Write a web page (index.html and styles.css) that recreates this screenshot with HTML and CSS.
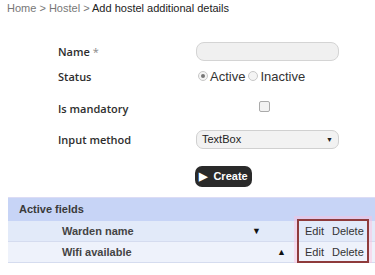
FILE: index.html
```html
<!DOCTYPE html>
<html lang="en">
<head>
  <meta charset="UTF-8">
  <meta name="viewport" content="width=device-width, initial-scale=1.0">
  <title>Add hostel additional details</title>
  <link rel="stylesheet" href="styles.css">
</head>
<body>
  <div class="crumbs">
    <span class="crumb-link">Home</span> &gt; <span class="crumb-link">Hostel</span> &gt; <span class="crumb-current">Add hostel additional details</span>
  </div>

  <div class="form">
    <div class="row row-name">
      <label class="label">Name <span class="req">*</span></label>
      <div class="field"><div class="text-input"></div></div>
    </div>
    <div class="row row-status">
      <label class="label">Status</label>
      <div class="field radios">
        <span class="radio checked"></span><span class="radio-text">Active</span>
        <span class="radio"></span><span class="radio-text">Inactive</span>
      </div>
    </div>
    <div class="row row-mandatory">
      <label class="label">Is mandatory</label>
      <div class="field"><span class="checkbox"></span></div>
    </div>
    <div class="row row-method">
      <label class="label">Input method</label>
      <div class="field">
        <div class="select"><span>TextBox</span><span class="caret">&#9660;</span></div>
      </div>
    </div>
    <div class="row row-submit">
      <span class="label"></span>
      <button class="create-btn">&#9654;&nbsp; Create</button>
    </div>
  </div>

  <div class="fields">
    <div class="fields-head">Active fields</div>
    <div class="fields-row">
      <span class="fname">Warden name</span>
      <span class="arrows"><span class="down">&#9660;</span><span class="up"></span></span>
      <span class="actions"><span>Edit</span><span>Delete</span></span>
    </div>
    <div class="fields-row alt">
      <span class="fname">Wifi available</span>
      <span class="arrows"><span class="down"></span><span class="up">&#9650;</span></span>
      <span class="actions"><span>Edit</span><span>Delete</span></span>
    </div>
    <div class="highlight"></div>
  </div>
</body>
</html>
```

FILE: styles.css
```css
body {
  margin: 0;
  background: #fff;
  font-family: "Liberation Sans", Arial, sans-serif;
  color: #333;
}
.crumbs {
  padding: 1px 0 0 7px;
  height: 16px;
  font-size: 11px;
  line-height: 14px;
  color: #777;
}
.crumb-current {
  color: #222;
}
.form {
  padding: 25px 0 0 58px;
}
.row {
  display: flex;
  align-items: center;
}
.label {
  width: 138px;
  flex: none;
  font-family: "Open Sans", sans-serif;
  font-weight: 600;
  font-size: 11px;
  color: #2e2e2e;
}
.req {
  color: #888;
  font-weight: 400;
}
.row-name { height: 18px; }
.row-status { height: 20px; margin-top: 6px; }
.row-mandatory { height: 20px; margin-top: 10px; }
.row-method { height: 18px; margin-top: 14px; }
.row-submit { height: 20px; margin-top: 18px; }
.row-mandatory .label { padding-top: 4px; }
.text-input {
  width: 141px;
  height: 17px;
  border: 1px solid #d4d4d4;
  border-radius: 8px;
  background: #f0f0f0;
}
.radios {
  display: flex;
  align-items: center;
  font-size: 13px;
  color: #333;
  padding-left: 2px;
}
.radio {
  width: 8px;
  height: 8px;
  border: 1px solid #c8c8c8;
  border-radius: 50%;
  background: #f4f4f4;
  position: relative;
  margin-right: 2px;
}
.radio.checked::after {
  content: "";
  position: absolute;
  left: 2px;
  top: 2px;
  width: 4px;
  height: 4px;
  border-radius: 50%;
  background: #777;
}
.radio-text {
  margin-right: 3px;
}
.checkbox {
  display: block;
  margin-left: 63px;
  width: 9px;
  height: 9px;
  border: 1px solid #aaa;
  border-radius: 2px;
  background: #f2f2f2;
}
.select {
  width: 131px;
  height: 17px;
  border: 1px solid #d0d0d0;
  border-radius: 7px;
  background: #f2f2f2;
  display: flex;
  align-items: center;
  justify-content: space-between;
  padding: 0 5px;
  font-size: 11px;
  color: #222;
}
.caret {
  font-size: 7px;
  color: #222;
}
.create-btn {
  height: 21px;
  width: 57px;
  margin-left: -1px;
  border: none;
  border-radius: 7px;
  background: #2a2a2a;
  color: #fff;
  font-family: "Liberation Sans", Arial, sans-serif;
  font-weight: bold;
  font-size: 11px;
  padding: 0;
}
.fields {
  position: relative;
  margin: 11px 0 0 8px;
  border-top: 1px solid #dcdcf5;
  font-size: 11px;
}
.fields-head {
  height: 23px;
  line-height: 23px;
  padding-left: 11px;
  background: #c7d4f6;
  font-weight: bold;
  color: #3a3a3a;
}
.fields-row {
  display: flex;
  align-items: center;
  height: 20px;
  background: #e2eaf9;
  border-bottom: 1px solid #d5dcef;
  color: #333;
}
.fields-row.alt {
  background: #eef2fb;
}
.fname {
  width: 187px;
  padding-left: 54px;
  font-weight: bold;
  color: #444;
}
.arrows {
  display: flex;
  width: 53px;
  padding-left: 3px;
  font-size: 9px;
  color: #111;
}
.arrows span {
  width: 25px;
}
.actions {
  display: flex;
  gap: 8px;
  font-size: 11px;
  color: #333;
}
.highlight {
  position: absolute;
  left: 289px;
  top: 21px;
  width: 68px;
  height: 40px;
  border: 2px solid #8e3b3b;
  box-shadow: 0 0 0 3px rgba(255, 190, 220, 0.45);
}
```
